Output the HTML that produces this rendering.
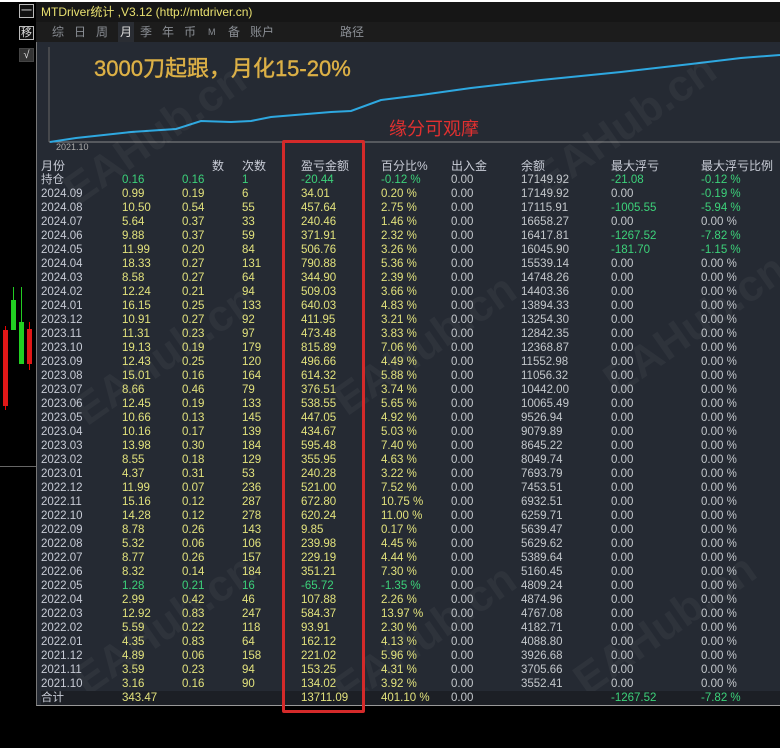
<!DOCTYPE html>
<html><head><meta charset="utf-8"><style>
*{margin:0;padding:0;box-sizing:border-box}
body{width:780px;height:748px;background:#000;position:relative;overflow:hidden;font-family:"Liberation Sans","Noto Sans CJK SC",sans-serif;}
.abs{position:absolute}
#title{left:36px;top:2px;width:744px;height:20px;background:#161616;color:#e8e070;font-size:12px;line-height:20px;padding-left:5px}
#tabs{left:36px;top:22px;width:744px;height:20px;background:#1c1c1c;color:#8a8e94;font-size:12px;line-height:20px}
#tabs span{position:absolute;top:0}
#panel{left:36px;top:42px;width:744px;height:664px;background:#252a33;border-left:1px solid #777;border-bottom:1px solid #999}
table{position:absolute;left:41px;top:159px;border-collapse:collapse;table-layout:fixed;font-size:11.5px}
td{height:14px;line-height:14px;padding:0;white-space:nowrap;color:#e2e27c}
td:first-child{color:#c8ccd6}
td:nth-child(7),td:nth-child(8),td:nth-child(9),td:nth-child(10){color:#c4c8cc}
.g,td.g{color:#3cd27a}
tr.h td{color:#c8ccd6;font-size:12px}
tr.t td{background:#1c1f25}
.wm{position:absolute;color:rgba(255,255,255,0.045);font-size:44px;font-weight:bold;transform:rotate(-35deg);white-space:nowrap}
.btn{position:absolute;left:19px;width:15px;height:14px;border:1px solid #bbb;color:#ddd;font-size:11px;line-height:12px;text-align:center;background:#111}
</style></head><body>
<div class="abs" style="left:0;top:0;width:780px;height:2px;background:#fff"></div>
<div class="btn" style="top:4px">一</div>
<div class="btn" style="top:26px">移</div>
<div class="btn" style="top:48px;border-color:#444;background:#333">√</div>
<!-- candles -->
<div class="abs" style="left:5px;top:326px;width:1px;height:84px;background:#e00"></div>
<div class="abs" style="left:3px;top:330px;width:5px;height:76px;background:#e01818"></div>
<div class="abs" style="left:13px;top:287px;width:1px;height:20px;background:#2c2"></div>
<div class="abs" style="left:11px;top:300px;width:5px;height:30px;background:#22d022"></div>
<div class="abs" style="left:21px;top:287px;width:1px;height:40px;background:#2c2"></div>
<div class="abs" style="left:19px;top:322px;width:5px;height:42px;background:#22d022"></div>
<div class="abs" style="left:29px;top:322px;width:1px;height:48px;background:#e00"></div>
<div class="abs" style="left:27px;top:329px;width:5px;height:35px;background:#e01818"></div>
<div class="abs" style="left:0;top:466px;width:36px;height:1px;background:#666"></div>

<div id="title" class="abs">MTDriver统计 ,V3.12 (http://mtdriver.cn)</div>
<div id="tabs" class="abs">
<span style="left:16px">综</span><span style="left:38px">日</span><span style="left:60px">周</span><span style="left:82px;color:#ddd;background:#2a2d33;padding:0 2px">月</span><span style="left:104px">季</span><span style="left:126px">年</span><span style="left:148px">币</span><span style="left:172px;font-size:9px">M</span><span style="left:192px">备</span><span style="left:214px">账户</span><span style="left:304px">路径</span>
</div>
<div id="panel" class="abs"></div>
<svg class="abs" style="left:36px;top:42px" width="744" height="120">
<line x1="13" y1="5" x2="13" y2="100" stroke="#666" stroke-width="1"/>
<line x1="13" y1="100" x2="744" y2="100" stroke="#888" stroke-width="1"/>
<polyline fill="none" stroke="#2ea8e0" stroke-width="2" points="14,100 40,96 95,90 140,87 165,79 195,80 215,79 235,75 295,70 315,69 345,58 385,53 435,46 505,38 585,30 655,22 705,16 744,13"/>
<text x="20" y="108" fill="#aaa" font-size="9" font-family="Liberation Sans">2021.10</text>
</svg>
<div class="abs" style="left:94px;top:51px;font-size:22px;color:#dcb046;-webkit-text-stroke:0.4px #dcb046">3000刀起跟，月化15-20%</div>
<div class="abs" style="left:389px;top:115px;font-size:18px;color:#e03030">缘分可观摩</div>

<div class="wm" style="left:50px;top:110px">EAHub.cn</div>
<div class="wm" style="left:520px;top:100px">EAHub.cn</div>
<div class="wm" style="left:60px;top:330px">EAHub.cn</div>
<div class="wm" style="left:320px;top:320px">EAHub.cn</div>
<div class="wm" style="left:590px;top:300px">EAHub.cn</div>
<div class="wm" style="left:60px;top:600px">EAHub.cn</div>
<div class="wm" style="left:320px;top:610px">EAHub.cn</div>
<div class="wm" style="left:560px;top:600px">EAHub.cn</div>

<table>
<colgroup><col style="width:81px"><col style="width:60px"><col style="width:60px"><col style="width:59px"><col style="width:80px"><col style="width:70px"><col style="width:70px"><col style="width:90px"><col style="width:90px"><col style="width:79px"></colgroup>
<tr class="h"><td>月份</td><td></td><td style="padding-left:30px">数</td><td>次数</td><td>盈亏金额</td><td>百分比%</td><td>出入金</td><td>余额</td><td>最大浮亏</td><td>最大浮亏比例</td></tr>
<tr><td>持仓</td><td class="g">0.16</td><td class="g">0.16</td><td class="g">1</td><td class="g">-20.44</td><td class="g">-0.12 %</td><td>0.00</td><td>17149.92</td><td class="g">-21.08</td><td class="g">-0.12 %</td></tr>
<tr><td>2024.09</td><td>0.99</td><td>0.19</td><td>6</td><td>34.01</td><td>0.20 %</td><td>0.00</td><td>17149.92</td><td>0.00</td><td class="g">-0.19 %</td></tr>
<tr><td>2024.08</td><td>10.50</td><td>0.54</td><td>55</td><td>457.64</td><td>2.75 %</td><td>0.00</td><td>17115.91</td><td class="g">-1005.55</td><td class="g">-5.94 %</td></tr>
<tr><td>2024.07</td><td>5.64</td><td>0.37</td><td>33</td><td>240.46</td><td>1.46 %</td><td>0.00</td><td>16658.27</td><td>0.00</td><td>0.00 %</td></tr>
<tr><td>2024.06</td><td>9.88</td><td>0.37</td><td>59</td><td>371.91</td><td>2.32 %</td><td>0.00</td><td>16417.81</td><td class="g">-1267.52</td><td class="g">-7.82 %</td></tr>
<tr><td>2024.05</td><td>11.99</td><td>0.20</td><td>84</td><td>506.76</td><td>3.26 %</td><td>0.00</td><td>16045.90</td><td class="g">-181.70</td><td class="g">-1.15 %</td></tr>
<tr><td>2024.04</td><td>18.33</td><td>0.27</td><td>131</td><td>790.88</td><td>5.36 %</td><td>0.00</td><td>15539.14</td><td>0.00</td><td>0.00 %</td></tr>
<tr><td>2024.03</td><td>8.58</td><td>0.27</td><td>64</td><td>344.90</td><td>2.39 %</td><td>0.00</td><td>14748.26</td><td>0.00</td><td>0.00 %</td></tr>
<tr><td>2024.02</td><td>12.24</td><td>0.21</td><td>94</td><td>509.03</td><td>3.66 %</td><td>0.00</td><td>14403.36</td><td>0.00</td><td>0.00 %</td></tr>
<tr><td>2024.01</td><td>16.15</td><td>0.25</td><td>133</td><td>640.03</td><td>4.83 %</td><td>0.00</td><td>13894.33</td><td>0.00</td><td>0.00 %</td></tr>
<tr><td>2023.12</td><td>10.91</td><td>0.27</td><td>92</td><td>411.95</td><td>3.21 %</td><td>0.00</td><td>13254.30</td><td>0.00</td><td>0.00 %</td></tr>
<tr><td>2023.11</td><td>11.31</td><td>0.23</td><td>97</td><td>473.48</td><td>3.83 %</td><td>0.00</td><td>12842.35</td><td>0.00</td><td>0.00 %</td></tr>
<tr><td>2023.10</td><td>19.13</td><td>0.19</td><td>179</td><td>815.89</td><td>7.06 %</td><td>0.00</td><td>12368.87</td><td>0.00</td><td>0.00 %</td></tr>
<tr><td>2023.09</td><td>12.43</td><td>0.25</td><td>120</td><td>496.66</td><td>4.49 %</td><td>0.00</td><td>11552.98</td><td>0.00</td><td>0.00 %</td></tr>
<tr><td>2023.08</td><td>15.01</td><td>0.16</td><td>164</td><td>614.32</td><td>5.88 %</td><td>0.00</td><td>11056.32</td><td>0.00</td><td>0.00 %</td></tr>
<tr><td>2023.07</td><td>8.66</td><td>0.46</td><td>79</td><td>376.51</td><td>3.74 %</td><td>0.00</td><td>10442.00</td><td>0.00</td><td>0.00 %</td></tr>
<tr><td>2023.06</td><td>12.45</td><td>0.19</td><td>133</td><td>538.55</td><td>5.65 %</td><td>0.00</td><td>10065.49</td><td>0.00</td><td>0.00 %</td></tr>
<tr><td>2023.05</td><td>10.66</td><td>0.13</td><td>145</td><td>447.05</td><td>4.92 %</td><td>0.00</td><td>9526.94</td><td>0.00</td><td>0.00 %</td></tr>
<tr><td>2023.04</td><td>10.16</td><td>0.17</td><td>139</td><td>434.67</td><td>5.03 %</td><td>0.00</td><td>9079.89</td><td>0.00</td><td>0.00 %</td></tr>
<tr><td>2023.03</td><td>13.98</td><td>0.30</td><td>184</td><td>595.48</td><td>7.40 %</td><td>0.00</td><td>8645.22</td><td>0.00</td><td>0.00 %</td></tr>
<tr><td>2023.02</td><td>8.55</td><td>0.18</td><td>129</td><td>355.95</td><td>4.63 %</td><td>0.00</td><td>8049.74</td><td>0.00</td><td>0.00 %</td></tr>
<tr><td>2023.01</td><td>4.37</td><td>0.31</td><td>53</td><td>240.28</td><td>3.22 %</td><td>0.00</td><td>7693.79</td><td>0.00</td><td>0.00 %</td></tr>
<tr><td>2022.12</td><td>11.99</td><td>0.07</td><td>236</td><td>521.00</td><td>7.52 %</td><td>0.00</td><td>7453.51</td><td>0.00</td><td>0.00 %</td></tr>
<tr><td>2022.11</td><td>15.16</td><td>0.12</td><td>287</td><td>672.80</td><td>10.75 %</td><td>0.00</td><td>6932.51</td><td>0.00</td><td>0.00 %</td></tr>
<tr><td>2022.10</td><td>14.28</td><td>0.12</td><td>278</td><td>620.24</td><td>11.00 %</td><td>0.00</td><td>6259.71</td><td>0.00</td><td>0.00 %</td></tr>
<tr><td>2022.09</td><td>8.78</td><td>0.26</td><td>143</td><td>9.85</td><td>0.17 %</td><td>0.00</td><td>5639.47</td><td>0.00</td><td>0.00 %</td></tr>
<tr><td>2022.08</td><td>5.32</td><td>0.06</td><td>106</td><td>239.98</td><td>4.45 %</td><td>0.00</td><td>5629.62</td><td>0.00</td><td>0.00 %</td></tr>
<tr><td>2022.07</td><td>8.77</td><td>0.26</td><td>157</td><td>229.19</td><td>4.44 %</td><td>0.00</td><td>5389.64</td><td>0.00</td><td>0.00 %</td></tr>
<tr><td>2022.06</td><td>8.32</td><td>0.14</td><td>184</td><td>351.21</td><td>7.30 %</td><td>0.00</td><td>5160.45</td><td>0.00</td><td>0.00 %</td></tr>
<tr><td>2022.05</td><td class="g">1.28</td><td class="g">0.21</td><td class="g">16</td><td class="g">-65.72</td><td class="g">-1.35 %</td><td>0.00</td><td>4809.24</td><td>0.00</td><td>0.00 %</td></tr>
<tr><td>2022.04</td><td>2.99</td><td>0.42</td><td>46</td><td>107.88</td><td>2.26 %</td><td>0.00</td><td>4874.96</td><td>0.00</td><td>0.00 %</td></tr>
<tr><td>2022.03</td><td>12.92</td><td>0.83</td><td>247</td><td>584.37</td><td>13.97 %</td><td>0.00</td><td>4767.08</td><td>0.00</td><td>0.00 %</td></tr>
<tr><td>2022.02</td><td>5.59</td><td>0.22</td><td>118</td><td>93.91</td><td>2.30 %</td><td>0.00</td><td>4182.71</td><td>0.00</td><td>0.00 %</td></tr>
<tr><td>2022.01</td><td>4.35</td><td>0.83</td><td>64</td><td>162.12</td><td>4.13 %</td><td>0.00</td><td>4088.80</td><td>0.00</td><td>0.00 %</td></tr>
<tr><td>2021.12</td><td>4.89</td><td>0.06</td><td>158</td><td>221.02</td><td>5.96 %</td><td>0.00</td><td>3926.68</td><td>0.00</td><td>0.00 %</td></tr>
<tr><td>2021.11</td><td>3.59</td><td>0.23</td><td>94</td><td>153.25</td><td>4.31 %</td><td>0.00</td><td>3705.66</td><td>0.00</td><td>0.00 %</td></tr>
<tr><td>2021.10</td><td>3.16</td><td>0.16</td><td>90</td><td>134.02</td><td>3.92 %</td><td>0.00</td><td>3552.41</td><td>0.00</td><td>0.00 %</td></tr>
<tr class="t"><td>合计</td><td>343.47</td><td></td><td></td><td>13711.09</td><td>401.10 %</td><td>0.00</td><td></td><td class="g">-1267.52</td><td class="g">-7.82 %</td></tr>
</table>
<div class="abs" style="left:282px;top:140px;width:83px;height:573px;border:3px solid #d42a2a;border-radius:2px"></div>
</body></html>
